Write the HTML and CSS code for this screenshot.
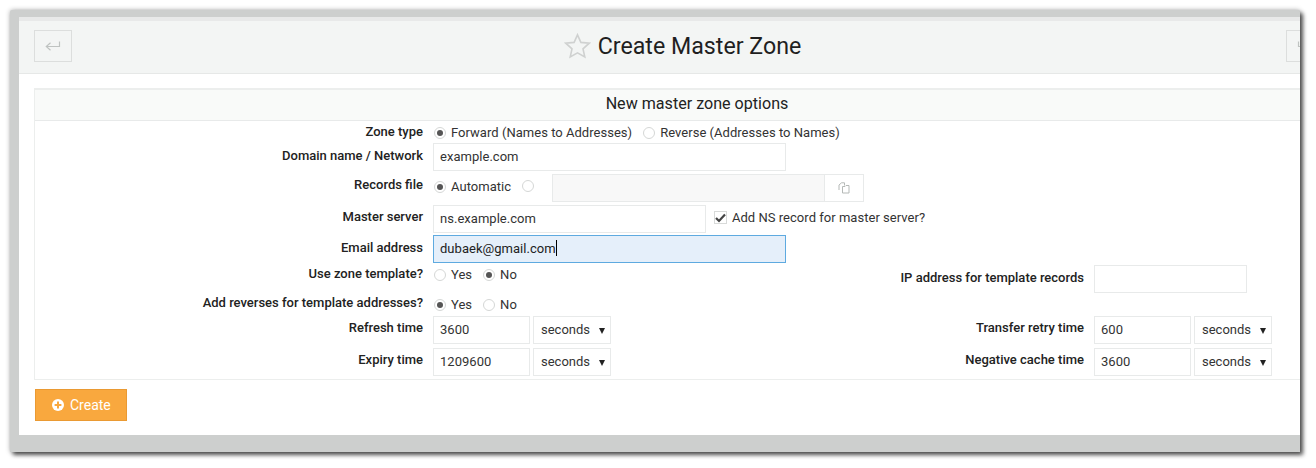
FILE: index.html
```html
<!DOCTYPE html>
<html lang="en">
<head>
<meta charset="utf-8">
<title>Create Master Zone</title>
<link rel="stylesheet" href="styles.css">
</head>
<body>
<div class="window">
  <div class="frame-top"></div>
  <div class="content">
    <header class="header">
      <button class="nav-btn" type="button" aria-label="Back">
        <svg width="16" height="11" viewBox="0 0 16 11" fill="none" stroke="#bfc3c1" stroke-width="1.2"><path d="M14.5 0.5V5.5H1.5M5.5 1.8L1.3 5.5L5.5 9.2"/></svg>
      </button>
      <h1 class="title">
        <svg class="star" width="27" height="26" viewBox="0 0 27 26" fill="none" stroke="#cfd1d0" stroke-width="1.6"><path d="M13.5 1.8L16.9 9.4L25.2 10.2L19 15.8L20.8 24L13.5 19.8L6.2 24L8 15.8L1.8 10.2L10.1 9.4Z"/></svg>
        Create Master Zone
      </h1>
      <button class="nav-btn nav-right" type="button" aria-label="Forward">
        <svg width="16" height="11" viewBox="0 0 16 11" fill="none" stroke="#bfc3c1" stroke-width="1.2"><path d="M1.5 0.5V5.5H14.5M10.5 1.8L14.7 5.5L10.5 9.2"/></svg>
      </button>
    </header>
    <main class="main">
      <section class="panel">
        <h2 class="panel-title">New master zone options</h2>
        <div class="rows">
          <div class="row r-zone">
            <div class="label">Zone type</div>
            <div class="field">
              <label class="opt"><span class="radio on"></span>Forward (Names to Addresses)</label>
              <label class="opt"><span class="radio"></span>Reverse (Addresses to Names)</label>
            </div>
          </div>
          <div class="row r-domain">
            <div class="label">Domain name / Network</div>
            <div class="field"><input class="input w-long" value="example.com"></div>
          </div>
          <div class="row r-file">
            <div class="label">Records file</div>
            <div class="field">
              <label class="opt"><span class="radio on"></span>Automatic</label>
              <span class="radio solo"></span>
              <div class="filebox">
                <span class="file-input"></span>
                <span class="file-btn">
                  <svg width="12" height="12" viewBox="0 0 12 12" fill="none" stroke="#b5b9b7" stroke-width="1"><path d="M1 8V3L3.5 0.8H6.5V3.5M4.5 4.5H7L8 3.5H11V11H4.5Z"/></svg>
                </span>
              </div>
            </div>
          </div>
          <div class="row r-master">
            <div class="label">Master server</div>
            <div class="field">
              <input class="input w-mid" value="ns.example.com">
              <label class="opt check-opt">
                <span class="check"><svg width="11" height="10" viewBox="0 0 11 10" fill="none" stroke="#444" stroke-width="2.2"><path d="M1 5L4 8L10 1.5"/></svg></span>Add NS record for master server?
              </label>
            </div>
          </div>
          <div class="row r-email">
            <div class="label">Email address</div>
            <div class="field caret-host">
              <input class="input w-long focus" value="dubaek@gmail.com">
              <span class="caret"></span>
            </div>
          </div>
          <div class="row r-template">
            <div class="half">
              <div class="label">Use zone template?</div>
              <div class="field">
                <label class="opt"><span class="radio"></span>Yes</label>
                <label class="opt"><span class="radio on"></span>No</label>
              </div>
            </div>
            <div class="label label2">IP address for template records</div>
            <div class="field"><input class="input w-ip"></div>
          </div>
          <div class="row r-reverse">
            <div class="label">Add reverses for template addresses?</div>
            <div class="field">
              <label class="opt"><span class="radio on"></span>Yes</label>
              <label class="opt"><span class="radio"></span>No</label>
            </div>
          </div>
          <div class="row r-time">
            <div class="half">
              <div class="label">Refresh time</div>
              <div class="field">
                <input class="input w-num" value="3600">
                <div class="select">seconds<span class="tri"></span></div>
              </div>
            </div>
            <div class="label label2">Transfer retry time</div>
            <div class="field">
              <input class="input w-num" value="600">
              <div class="select">seconds<span class="tri"></span></div>
            </div>
          </div>
          <div class="row r-time r-last">
            <div class="half">
              <div class="label">Expiry time</div>
              <div class="field">
                <input class="input w-num" value="1209600">
                <div class="select">seconds<span class="tri"></span></div>
              </div>
            </div>
            <div class="label label2">Negative cache time</div>
            <div class="field">
              <input class="input w-num" value="3600">
              <div class="select">seconds<span class="tri"></span></div>
            </div>
          </div>
        </div>
      </section>
      <button class="create" type="button">
        <svg width="12" height="12" viewBox="0 0 12 12"><circle cx="6" cy="6" r="6" fill="#fff"/><path d="M6 2.6V9.4M2.6 6H9.4" stroke="#f9a83e" stroke-width="2"/></svg>
        Create
      </button>
    </main>
  </div>
</div>
</body>
</html>
```
FILE: styles.css
```css
* { box-sizing: border-box; }
html, body { margin: 0; padding: 0; background: #fff; }
body { height: 468px; overflow: hidden; font-family: Roboto, "Liberation Sans", sans-serif; color: #2a2a2a; }

.window {
  width: 1290px;
  height: 442px;
  margin: 10px 0 0 10px;
  padding: 0 0 17px 9px;
  background: #cdcfce;
  overflow: hidden;
  border-radius: 2px 2px 0 0;
  box-shadow: 3px 3px 4px rgba(0,0,0,.65), 0 0 5px rgba(0,0,0,.3);
  display: flex;
  flex-direction: column;
}
.frame-top { height: 7px; flex: none; }
.content { flex: 1; background: #fff; width: 1290px; border-top: 4px solid #e8e9e9; }

.header {
  height: 53px;
  background: #f3f5f4;
  border-bottom: 1px solid #e6e8e7;
  display: flex;
  align-items: flex-start;
  justify-content: center;
  padding-top: 10px;
  position: relative;
}
.nav-btn {
  position: absolute;
  left: 15px;
  top: 9px;
  width: 38px;
  height: 32px;
  padding: 0;
  background: #f3f5f4;
  border: 1px solid #dcdedd;
  display: flex;
  align-items: center;
  justify-content: center;
}
.nav-right { left: 1267px; }
.title {
  margin: 0 0 0 37px;
  font-size: 23.2px;
  font-weight: 400;
  line-height: 30px;
  color: #1f1f1f;
  display: flex;
  align-items: center;
  gap: 7px;
}
.star { flex: none; }

.main { padding: 14px 0 0 15px; }
.panel { width: 1400px; height: 292px; border: 1px solid #eceeed; border-top-width: 2px; }
.panel-title {
  margin: 0;
  height: 31px;
  background: #f9faf9;
  border-bottom: 1px solid #e8eaea;
  font-size: 16.1px;
  font-weight: 400;
  line-height: 27px;
  text-align: center;
  padding-right: 74px;
  color: #222;
}
.rows { display: flex; flex-direction: column; }
.row { display: flex; font-size: 13px; }
.half { display: flex; width: 650px; flex: none; }
.label {
  width: 388px;
  flex: none;
  text-align: right;
  font-weight: 500;
  color: #222;
  line-height: 17px;
}
.label2 { width: 399px; white-space: nowrap; }
.field { margin-left: 10px; display: flex; align-items: flex-start; flex: none; }

.r-zone { height: 22px; }
.r-zone .label { padding-top: 2px; }
.r-zone .field { padding-top: 3px; }
.r-domain { height: 31px; }
.r-domain .label { padding-top: 4px; }
.r-file { height: 31px; }
.r-file .label { padding-top: 2px; }
.r-file .opt { margin-top: 4px; }
.r-file .solo { margin-top: 6px; }
.r-master { height: 30px; }
.r-master .label { padding-top: 3px; }
.r-email { height: 30px; }
.r-email .label { padding-top: 4px; }
.r-template { height: 29px; }
.r-template .opt { margin-top: 1px; }
.r-template .label2 { padding-top: 4px; }
.r-reverse { height: 22px; }
.r-reverse .field { padding-top: 2px; }
.r-time { height: 32px; }
.r-time .label { padding-top: 3px; }
.r-last { height: 30px; }

.input {
  height: 28px;
  border: 1px solid #e8eaea;
  background: #fff;
  padding: 0 6px 2px;
  font: 400 13px Roboto, "Liberation Sans", sans-serif;
  letter-spacing: .03px;
  color: #333;
  outline: none;
  display: block;
}
.w-long { width: 353px; }
.w-mid { width: 273px; }
.w-ip { width: 153px; }
.w-num { width: 97px; }
.focus { background: #e5effa; border-color: #5eaae0; color: #222; }

.opt { display: inline-flex; align-items: center; color: #333; margin-right: 10px; white-space: nowrap; font-size: 13px; line-height: 17px; letter-spacing: .03px; }
.radio {
  width: 12px;
  height: 12px;
  flex: none;
  margin: 0 5px 0 1px;
  border: 1px solid #d5d7d6;
  border-radius: 50%;
  background: #fff;
  position: relative;
}
.radio.on::after {
  content: "";
  position: absolute;
  left: 2px; top: 2px;
  width: 6px; height: 6px;
  border-radius: 50%;
  background: #555;
}
.radio.solo { margin-right: 18px; }
.filebox { display: flex; height: 28px; }
.file-input { width: 273px; background: #f8f8f8; border: 1px solid #e8eaea; }
.file-btn { width: 39px; border: 1px solid #e8eaea; border-left: 0; display: flex; align-items: center; justify-content: center; background: #fff; }
.check-opt { margin: 4px 0 0 8px; }
.check {
  width: 13px; height: 13px;
  border: 1px solid #d8dad9;
  margin-right: 5px;
  display: flex;
  align-items: center;
  justify-content: center;
  background: #fff;
}
.caret-host { position: relative; }
.caret { position: absolute; left: 123px; top: 5px; width: 1px; height: 16px; background: #000; }
.select {
  width: 78px;
  height: 28px;
  margin-left: 3px;
  border: 1px solid #e8eaea;
  background: #fff;
  padding-left: 7px;
  line-height: 25px;
  color: #333;
  position: relative;
}
.tri {
  position: absolute;
  right: 5px;
  top: 11px;
  border-left: 3.5px solid transparent;
  border-right: 3.5px solid transparent;
  border-top: 6px solid #222;
}
.create {
  display: flex;
  align-items: center;
  gap: 6px;
  margin: 9px 0 0 1px;
  width: 92px;
  height: 32px;
  padding: 0 0 0 16px;
  background: #f9a83e;
  border: 1px solid #ea9a33;
  color: #fff;
  font: 400 14px Roboto, "Liberation Sans", sans-serif;
}
```
